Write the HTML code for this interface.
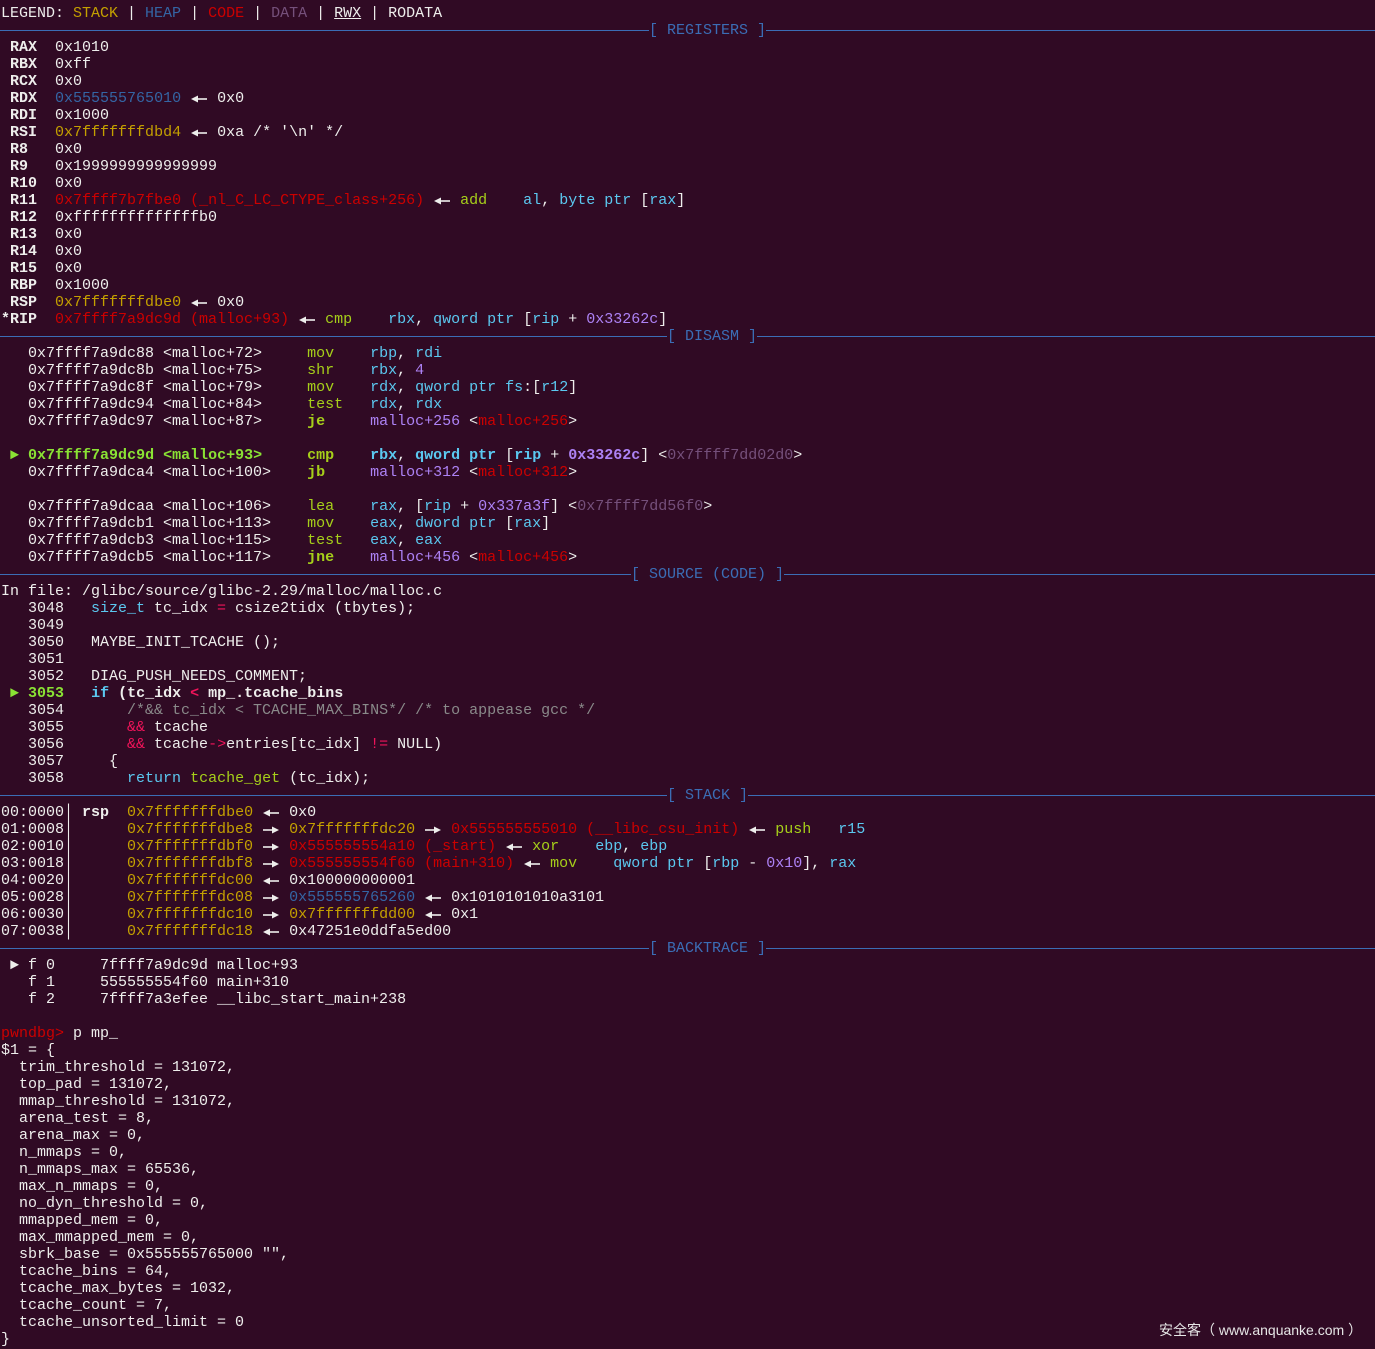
<!DOCTYPE html>
<html><head><meta charset="utf-8"><style>
html,body{margin:0;padding:0;background:#300a24;}
body{width:1375px;height:1349px;overflow:hidden;position:relative;font-family:"Liberation Mono","DejaVu Sans Mono",monospace;font-size:15px;color:#eeeeec;}
#t{position:absolute;left:1px;top:5px;}
.l{height:17px;line-height:17px;white-space:pre;}
.h{position:relative;height:17px;}
.h::before{content:"";position:absolute;left:-1px;width:1375px;top:8px;height:1px;background:#3b6db5;}
.h span{position:absolute;top:0;background:#300a24;color:#3b6db5;line-height:17px;white-space:pre;}
b{font-weight:bold}
.y{color:#c4a000}.bl{color:#3465a4}.r{color:#cc0000}.d{color:#75507b}
.g{color:#a6cf1a}.c{color:#5bc8f0}.p{color:#ad82f5}.gr{color:#8a8a8a}.k{color:#f0145a}
.cur{color:#8ae234}
svg.a{display:inline-block;width:18px;height:17px;vertical-align:top;}
#wm{position:absolute;left:1159px;top:1320px;font-family:"Liberation Sans","Noto Sans CJK SC",sans-serif;font-size:14px;color:#e6e6e6;white-space:pre;}
</style></head><body>
<svg width="0" height="0" style="position:absolute"><defs>
<symbol id="L" viewBox="0 0 18 17"><path d="M1 9 L8 5.5 L8 12.5 Z" fill="#eeeeec"/><rect x="7" y="8.2" width="10" height="1.6" fill="#eeeeec"/></symbol>
<symbol id="R" viewBox="0 0 18 17"><path d="M17 9 L10 5.5 L10 12.5 Z" fill="#eeeeec"/><rect x="1" y="8.2" width="10" height="1.6" fill="#eeeeec"/></symbol>
</defs></svg>
<div id="t">
<div class="l">LEGEND: <span class="y">STACK</span> | <span class="bl">HEAP</span> | <span class="r">CODE</span> | <span class="d">DATA</span> | <u>RWX</u> | RODATA</div>
<div class="h"><span style="left:648px">[ REGISTERS ]</span></div>
<div class="l"> <b>RAX</b>  0x1010</div>
<div class="l"> <b>RBX</b>  0xff</div>
<div class="l"> <b>RCX</b>  0x0</div>
<div class="l"> <b>RDX</b>  <span class="bl">0x555555765010</span> <svg class="a"><use href="#L"/></svg> 0x0</div>
<div class="l"> <b>RDI</b>  0x1000</div>
<div class="l"> <b>RSI</b>  <span class="y">0x7fffffffdbd4</span> <svg class="a"><use href="#L"/></svg> 0xa /* '\n' */</div>
<div class="l"> <b>R8 </b>  0x0</div>
<div class="l"> <b>R9 </b>  0x1999999999999999</div>
<div class="l"> <b>R10</b>  0x0</div>
<div class="l"> <b>R11</b>  <span class="r">0x7ffff7b7fbe0 (_nl_C_LC_CTYPE_class+256)</span> <svg class="a"><use href="#L"/></svg> <span class="g">add</span>    <span class="c">al</span>, <span class="c">byte ptr</span> [<span class="c">rax</span>]</div>
<div class="l"> <b>R12</b>  0xffffffffffffffb0</div>
<div class="l"> <b>R13</b>  0x0</div>
<div class="l"> <b>R14</b>  0x0</div>
<div class="l"> <b>R15</b>  0x0</div>
<div class="l"> <b>RBP</b>  0x1000</div>
<div class="l"> <b>RSP</b>  <span class="y">0x7fffffffdbe0</span> <svg class="a"><use href="#L"/></svg> 0x0</div>
<div class="l"><b>*RIP</b>  <span class="r">0x7ffff7a9dc9d (malloc+93)</span> <svg class="a"><use href="#L"/></svg> <span class="g">cmp</span>    <span class="c">rbx</span>, <span class="c">qword ptr</span> [<span class="c">rip</span> + <span class="p">0x33262c</span>]</div>
<div class="h"><span style="left:666px">[ DISASM ]</span></div>
<div class="l">   0x7ffff7a9dc88 &lt;malloc+72&gt;     <span class="g">mov</span>    <span class="c">rbp</span>, <span class="c">rdi</span></div>
<div class="l">   0x7ffff7a9dc8b &lt;malloc+75&gt;     <span class="g">shr</span>    <span class="c">rbx</span>, <span class="p">4</span></div>
<div class="l">   0x7ffff7a9dc8f &lt;malloc+79&gt;     <span class="g">mov</span>    <span class="c">rdx</span>, <span class="c">qword ptr</span> <span class="c">fs</span>:[<span class="c">r12</span>]</div>
<div class="l">   0x7ffff7a9dc94 &lt;malloc+84&gt;     <span class="g">test</span>   <span class="c">rdx</span>, <span class="c">rdx</span></div>
<div class="l">   0x7ffff7a9dc97 &lt;malloc+87&gt;     <b class="g">je</b>     <span class="p">malloc+256</span> &lt;<span class="r">malloc+256</span>&gt;</div>
<div class="l"> </div>
<div class="l"> <span class="cur">►</span> <b class="cur">0x7ffff7a9dc9d &lt;malloc+93&gt;</b>     <b class="g">cmp</b>    <b class="c">rbx</b>, <b class="c">qword ptr</b> [<b class="c">rip</b> + <b class="p">0x33262c</b>] &lt;<span class="d">0x7ffff7dd02d0</span>&gt;</div>
<div class="l">   0x7ffff7a9dca4 &lt;malloc+100&gt;    <b class="g">jb</b>     <span class="p">malloc+312</span> &lt;<span class="r">malloc+312</span>&gt;</div>
<div class="l"> </div>
<div class="l">   0x7ffff7a9dcaa &lt;malloc+106&gt;    <span class="g">lea</span>    <span class="c">rax</span>, [<span class="c">rip</span> + <span class="p">0x337a3f</span>] &lt;<span class="d">0x7ffff7dd56f0</span>&gt;</div>
<div class="l">   0x7ffff7a9dcb1 &lt;malloc+113&gt;    <span class="g">mov</span>    <span class="c">eax</span>, <span class="c">dword ptr</span> [<span class="c">rax</span>]</div>
<div class="l">   0x7ffff7a9dcb3 &lt;malloc+115&gt;    <span class="g">test</span>   <span class="c">eax</span>, <span class="c">eax</span></div>
<div class="l">   0x7ffff7a9dcb5 &lt;malloc+117&gt;    <b class="g">jne</b>    <span class="p">malloc+456</span> &lt;<span class="r">malloc+456</span>&gt;</div>
<div class="h"><span style="left:630px">[ SOURCE (CODE) ]</span></div>
<div class="l">In file: /glibc/source/glibc-2.29/malloc/malloc.c</div>
<div class="l">   3048   <span class="c">size_t</span> tc_idx <span class="k">=</span> csize2tidx (tbytes);</div>
<div class="l">   3049</div>
<div class="l">   3050   MAYBE_INIT_TCACHE ();</div>
<div class="l">   3051</div>
<div class="l">   3052   DIAG_PUSH_NEEDS_COMMENT;</div>
<div class="l"> <span class="cur">►</span> <b class="cur">3053</b>   <b class="c">if</b> <b>(tc_idx</b> <b class="k">&lt;</b> <b>mp_.tcache_bins</b></div>
<div class="l">   3054       <span class="gr">/*&amp;&amp; tc_idx &lt; TCACHE_MAX_BINS*/ /* to appease gcc */</span></div>
<div class="l">   3055       <span class="k">&amp;&amp;</span> tcache</div>
<div class="l">   3056       <span class="k">&amp;&amp;</span> tcache<span class="k">-&gt;</span>entries[tc_idx] <span class="k">!=</span> NULL)</div>
<div class="l">   3057     {</div>
<div class="l">   3058       <span class="c">return</span> <span class="g">tcache_get</span> (tc_idx);</div>
<div class="h"><span style="left:666px">[ STACK ]</span></div>
<div class="l">00:0000│ <b>rsp</b>  <span class="y">0x7fffffffdbe0</span> <svg class="a"><use href="#L"/></svg> 0x0</div>
<div class="l">01:0008│      <span class="y">0x7fffffffdbe8</span> <svg class="a"><use href="#R"/></svg> <span class="y">0x7fffffffdc20</span> <svg class="a"><use href="#R"/></svg> <span class="r">0x555555555010 (__libc_csu_init)</span> <svg class="a"><use href="#L"/></svg> <span class="g">push</span>   <span class="c">r15</span></div>
<div class="l">02:0010│      <span class="y">0x7fffffffdbf0</span> <svg class="a"><use href="#R"/></svg> <span class="r">0x555555554a10 (_start)</span> <svg class="a"><use href="#L"/></svg> <span class="g">xor</span>    <span class="c">ebp</span>, <span class="c">ebp</span></div>
<div class="l">03:0018│      <span class="y">0x7fffffffdbf8</span> <svg class="a"><use href="#R"/></svg> <span class="r">0x555555554f60 (main+310)</span> <svg class="a"><use href="#L"/></svg> <span class="g">mov</span>    <span class="c">qword ptr</span> [<span class="c">rbp</span> - <span class="p">0x10</span>], <span class="c">rax</span></div>
<div class="l">04:0020│      <span class="y">0x7fffffffdc00</span> <svg class="a"><use href="#L"/></svg> 0x100000000001</div>
<div class="l">05:0028│      <span class="y">0x7fffffffdc08</span> <svg class="a"><use href="#R"/></svg> <span class="bl">0x555555765260</span> <svg class="a"><use href="#L"/></svg> 0x1010101010a3101</div>
<div class="l">06:0030│      <span class="y">0x7fffffffdc10</span> <svg class="a"><use href="#R"/></svg> <span class="y">0x7fffffffdd00</span> <svg class="a"><use href="#L"/></svg> 0x1</div>
<div class="l">07:0038│      <span class="y">0x7fffffffdc18</span> <svg class="a"><use href="#L"/></svg> 0x47251e0ddfa5ed00</div>
<div class="h"><span style="left:648px">[ BACKTRACE ]</span></div>
<div class="l"> ► f 0     7ffff7a9dc9d malloc+93</div>
<div class="l">   f 1     555555554f60 main+310</div>
<div class="l">   f 2     7ffff7a3efee __libc_start_main+238</div>
<div class="l"> </div>
<div class="l"><span class="r">pwndbg&gt;</span> p mp_</div>
<div class="l">$1 = {</div>
<div class="l">  trim_threshold = 131072,</div>
<div class="l">  top_pad = 131072,</div>
<div class="l">  mmap_threshold = 131072,</div>
<div class="l">  arena_test = 8,</div>
<div class="l">  arena_max = 0,</div>
<div class="l">  n_mmaps = 0,</div>
<div class="l">  n_mmaps_max = 65536,</div>
<div class="l">  max_n_mmaps = 0,</div>
<div class="l">  no_dyn_threshold = 0,</div>
<div class="l">  mmapped_mem = 0,</div>
<div class="l">  max_mmapped_mem = 0,</div>
<div class="l">  sbrk_base = 0x555555765000 "",</div>
<div class="l">  tcache_bins = 64,</div>
<div class="l">  tcache_max_bytes = 1032,</div>
<div class="l">  tcache_count = 7,</div>
<div class="l">  tcache_unsorted_limit = 0</div>
<div class="l">}</div>
</div>
<div id="wm">安全客（ www.anquanke.com ）</div>
</body></html>
